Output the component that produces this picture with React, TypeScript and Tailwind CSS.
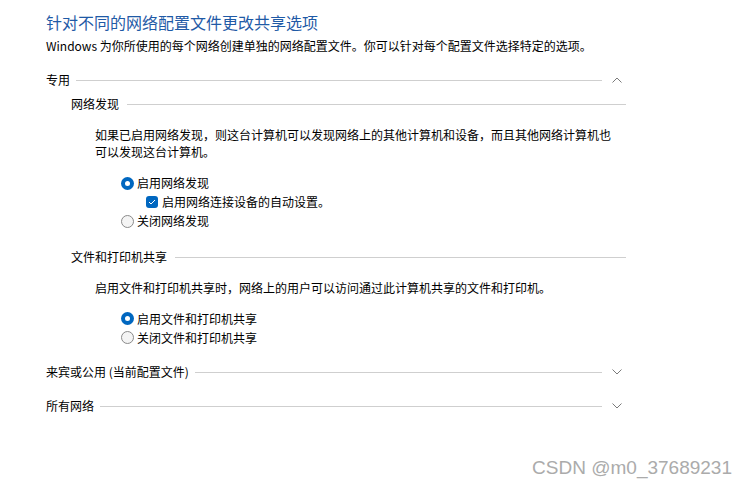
const font = { fontFamily: '"Noto Sans CJK SC", "Noto Sans", sans-serif' };

function Chevron({ up }: { up?: boolean }) {
  return (
    <svg width="10" height="6" viewBox="0 0 10 6" className="ml-[10px] shrink-0">
      <polyline
        points={up ? "0.5,5.5 5,1 9.5,5.5" : "0.5,0.5 5,5 9.5,0.5"}
        fill="none"
        stroke="#7a7a7a"
        strokeWidth="1"
      />
    </svg>
  );
}

function Section({ title, open, className }: { title: string; open?: boolean; className?: string }) {
  return (
    <div className={`flex items-center h-[18px] w-[576px] ${className ?? ""}`}>
      <span className="whitespace-nowrap">{title}</span>
      <div className="flex-1 h-px bg-[#cfcfcf] ml-[6px]" />
      <Chevron up={open} />
    </div>
  );
}

function SubSection({ title, className }: { title: string; className?: string }) {
  return (
    <div className={`flex items-center h-[18px] w-[555px] ml-[25px] ${className ?? ""}`}>
      <span className="whitespace-nowrap">{title}</span>
      <div className="flex-1 h-px bg-[#cfcfcf] ml-[8px]" />
    </div>
  );
}

function Radio({ label, checked, className }: { label: string; checked?: boolean; className?: string }) {
  return (
    <div className={`flex items-center ml-[75px] ${className ?? ""}`}>
      {checked ? (
        <span className="w-[13px] h-[13px] rounded-full bg-[#0067c0] flex items-center justify-center">
          <span className="w-[5px] h-[5px] rounded-full bg-white" />
        </span>
      ) : (
        <span className="w-[13px] h-[13px] rounded-full border border-[#8a8a8a] bg-[#f4f4f4]" />
      )}
      <span className="ml-[3px]">{label}</span>
    </div>
  );
}

function Check({ label, className }: { label: string; className?: string }) {
  return (
    <div className={`flex items-center ml-[100px] ${className ?? ""}`}>
      <span className="w-[12px] h-[12px] rounded-[3px] bg-[#0067c0] flex items-center justify-center">
        <svg width="8" height="6" viewBox="0 0 8 6">
          <polyline points="1,3 3,5 7,1" fill="none" stroke="white" strokeWidth="1" />
        </svg>
      </span>
      <span className="ml-[4px]">{label}</span>
    </div>
  );
}

export default function App() {
  return (
    <div className="relative w-[748px] h-[491px] bg-white text-[12px] text-black overflow-hidden" style={font}>
      <div className="pl-[46px] pt-[12px]">
        <div className="h-[20px] leading-[20px] text-[16px] text-[#1f5aa6]">
          针对不同的网络配置文件更改共享选项
        </div>
        <div className="mt-[6px] h-[16px] leading-[16px]">
          Windows 为你所使用的每个网络创建单独的网络配置文件。你可以针对每个配置文件选择特定的选项。
        </div>

        <Section title="专用" open className="mt-[17px]" />

        <SubSection title="网络发现" className="mt-[6px]" />
        <p className="mt-[13px] ml-[49px] leading-[17px]">
          如果已启用网络发现，则这台计算机可以发现网络上的其他计算机和设备，而且其他网络计算机也
          <br />
          可以发现这台计算机。
        </p>
        <Radio label="启用网络发现" checked className="mt-[14px] h-[18px]" />
        <Check label="启用网络连接设备的自动设置。" className="h-[20px]" />
        <Radio label="关闭网络发现" className="h-[18px]" />

        <SubSection title="文件和打印机共享" className="mt-[18px]" />
        <p className="mt-[13px] ml-[49px] leading-[17px]">
          启用文件和打印机共享时，网络上的用户可以访问通过此计算机共享的文件和打印机。
        </p>
        <Radio label="启用文件和打印机共享" checked className="mt-[13px] h-[19px]" />
        <Radio label="关闭文件和打印机共享" className="h-[19px]" />

        <Section title="来宾或公用 (当前配置文件)" className="mt-[16px]" />
        <Section title="所有网络" className="mt-[16px]" />
      </div>

      <div
        className="absolute right-[16px] bottom-[9px] text-[19px] text-[#ababab]"
        style={{ fontFamily: '"Liberation Sans", Arial, sans-serif' }}
      >
        CSDN @m0_37689231
      </div>
    </div>
  );
}
